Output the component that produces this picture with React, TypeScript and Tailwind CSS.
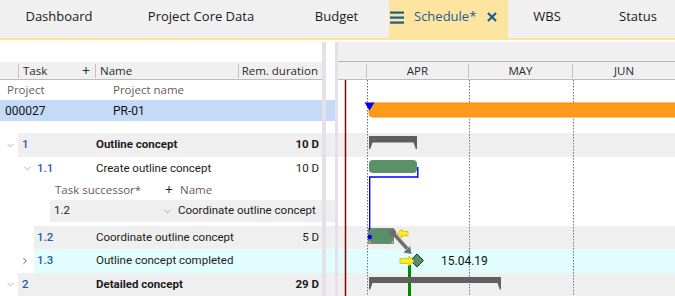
import { ChevronDown, ChevronRight } from "lucide-react";

const tabs = [
  { label: "Dashboard", w: "w-[118px]" },
  { label: "Project Core Data", w: "w-[166px]" },
  { label: "Budget", w: "w-[105px]" },
];

function TabBar() {
  return (
    <div className="flex h-[40px] bg-[#f0f0f0] border-b-2 border-[#fde493] font-['Open_Sans',sans-serif] text-[13px] text-[#1a1a1a]">
      {tabs.map((t) => (
        <div key={t.label} className={`${t.w} shrink-0 flex items-center justify-center pb-[4px]`}>
          {t.label}
        </div>
      ))}
      <div className="w-[119px] shrink-0 bg-[#fde59f] flex items-center pb-[4px] pl-[1px] text-[#1d5b94]">
        <svg width="14" height="13" viewBox="0 0 14 13" className="mr-[10px]">
          <rect x="0" y="0.5" width="14" height="2.2" fill="#1d5b94" />
          <rect x="0" y="5.5" width="14" height="2.2" fill="#1d5b94" />
          <rect x="0" y="10.5" width="14" height="2.2" fill="#1d5b94" />
        </svg>
        <span>Schedule*</span>
        <svg width="10" height="10" viewBox="0 0 10 10" className="ml-[11px]">
          <path d="M1 1 L9 9 M9 1 L1 9" stroke="#1d5b94" strokeWidth="2.2" />
        </svg>
      </div>
      <div className="w-[78px] shrink-0 flex items-center justify-center pb-[4px]">WBS</div>
      <div className="w-[104px] shrink-0 flex items-center justify-center pb-[4px]">Status</div>
    </div>
  );
}

function Row({
  h,
  bg = "",
  gap = "",
  gantt = "",
  children,
}: {
  h: string;
  bg?: string;
  gap?: string;
  gantt?: string;
  children?: React.ReactNode;
}) {
  return (
    <div className={`flex ${h}`}>
      <div className={`w-[322px] shrink-0 flex ${bg}`}>{children}</div>
      <div className="w-[4px] bg-[#e6e0e9]" />
      <div className={`w-[9px] ${gap}`} />
      <div className="w-[3px] bg-[#e6e0e9]" />
      <div className={`flex-1 ${gantt}`} />
    </div>
  );
}

function Chev() {
  return <ChevronDown size={11} strokeWidth={1.6} color="#9a9a9a" />;
}

function TaskRow({
  h,
  wide,
  lead,
  leadPad,
  num,
  name,
  dur,
  bold,
  bg,
  gantt,
}: {
  h: string;
  wide: boolean;
  lead?: React.ReactNode;
  leadPad: string;
  num: string;
  name: string;
  dur?: string;
  bold?: boolean;
  bg: string;
  gantt: string;
}) {
  return (
    <div className={`flex ${h}`}>
      <div className="w-[322px] shrink-0 flex">
        <div className={`${wide ? "w-[18px]" : "w-[34px]"} ${leadPad} flex items-center`}>{lead}</div>
        <div className={`flex-1 flex items-center ${bg} ${bold ? "font-bold" : ""}`}>
          <span className={`${wide ? "w-[78px] pl-[4px]" : "w-[62px] pl-[3px]"} font-medium text-[#1f5ea6]`}>
            {num}
          </span>
          <span className="flex-1 text-[#1c1c1c]">{name}</span>
          <span className="pr-[3px] text-[#1c1c1c]">{dur}</span>
        </div>
      </div>
      <div className="w-[4px] bg-[#e6e0e9]" />
      <div className={`w-[9px] ${bg}`} />
      <div className="w-[3px] bg-[#e6e0e9]" />
      <div className={`flex-1 ${gantt}`} />
    </div>
  );
}

function Divider() {
  return <div className="w-px h-[14px] bg-[#c4bfba] self-center" />;
}

function GanttDrawing() {
  return (
    <svg
      width="337"
      height="216"
      viewBox="0 0 337 216"
      className="absolute left-[338px] top-[38px]"
    >
      <line x1="7.5" y1="0" x2="7.5" y2="216" stroke="#8b0000" strokeWidth="1.5" />
      {[29.5, 131.5, 235.5].map((x) => (
        <line key={x} x1={x} y1="0" x2={x} y2="216" stroke="#6a7085" strokeWidth="1" strokeDasharray="1.5 1.5" />
      ))}
      {/* project bar */}
      <path d="M35 23 H340 V37 H35 Q31 37 31 33 V27 Q31 23 35 23 Z" fill="#ff9a1a" stroke="#f38d08" strokeWidth="1" />
      <polygon points="26.5,22.5 36.5,22.5 31.5,30.5" fill="#0000ee" />
      {/* summary 1 */}
      <path d="M31 56 H79 V69 H77.8 L75.5 62.5 H34.5 L32.2 69 H31 Z" fill="#5f5f5f" />
      {/* task 1.1 */}
      <rect x="31" y="80" width="48" height="13" rx="4" fill="#5a9168" />
      <path d="M79.8 87 V97 H31.7 V157" stroke="#0000ff" strokeWidth="1.4" fill="none" />
      {/* task 1.2 */}
      <rect x="31" y="149" width="24" height="14" rx="3" fill="#578f66" />
      <rect x="30.5" y="148.5" width="25" height="15" fill="none" stroke="#111" strokeWidth="1" strokeDasharray="1 1" />
      <circle cx="31.7" cy="157" r="2.3" fill="#0000ff" />
      {/* link arrow */}
      <circle cx="54.5" cy="152.5" r="3.5" fill="#6e6e6e" />
      <line x1="54.5" y1="152.5" x2="69" y2="168.5" stroke="#6e6e6e" strokeWidth="3.5" />
      <polygon points="73.5,174 65.5,172.5 72,166" fill="#6e6e6e" />
      <polygon points="59,153.5 64,149 64,151.3 70,151.3 70,155.7 64,155.7 64,158" fill="#ffeb2a" stroke="#d2b800" strokeWidth="0.8" />
      {/* milestone */}
      <rect x="70" y="185" width="3" height="31" fill="#008a00" />
      <polygon points="79,174 85.5,180.5 79,187 72.5,180.5" fill="#578f66" stroke="#2b2b2b" strokeWidth="1" />
      <polygon points="76,181 71,176 71,178.6 62,178.6 62,183.4 71,183.4 71,186" fill="#ffeb2a" stroke="#d2b800" strokeWidth="0.8" />
      <text x="103" y="184.5" fontFamily="Roboto, sans-serif" fontSize="12" fill="#111">
        15.04.19
      </text>
      {/* summary 2 */}
      <path d="M31 197 H163 V209.5 H161.8 L159.5 203 H34.5 L32.2 209.5 H31 Z" fill="#5f5f5f" />
    </svg>
  );
}

export default function App() {
  return (
    <div className="w-[675px] h-[296px] overflow-hidden bg-white font-['Roboto',sans-serif] text-[11.5px]">
      <TabBar />
      <div className="h-[2px]" />
      <div className="relative">
        {/* top band */}
        <div className="flex h-[20px]">
          <div className="w-[322px] shrink-0" />
          <div className="w-[4px] bg-[#e6e0e9]" />
          <div className="w-[9px]" />
          <div className="w-[3px] bg-[#e6e0e9]" />
          <div className="flex-1 bg-[#f0f0f0] border-b border-[#bab5b0]" />
        </div>
        {/* column header / months */}
        <div className="flex h-[18px] font-['Open_Sans',sans-serif] text-[11.5px] text-[#2a2a2a]">
          <div className="w-[322px] shrink-0 flex bg-[#f0f0f0] border-b border-[#c0bbb6]">
            <div className="w-[18px]" />
            <Divider />
            <div className="w-[76px] flex items-center justify-between pl-[4px] pr-[5px]">
              <span>Task</span>
              <span className="text-[14px] leading-none">+</span>
            </div>
            <Divider />
            <div className="w-[142px] flex items-center pl-[4px]">Name</div>
            <Divider />
            <div className="flex-1 flex items-center justify-end pr-[4px]">Rem. duration</div>
          </div>
          <div className="w-[4px] bg-[#e6e0e9]" />
          <div className="w-[9px]" />
          <div className="w-[3px] bg-[#e6e0e9]" />
          <div className="flex-1 flex bg-[#f0f0f0] border-b border-[#c0bbb6]">
            <div className="w-[28px]" />
            <Divider />
            <div className="w-[101px] flex items-center justify-center">APR</div>
            <Divider />
            <div className="w-[103px] flex items-center justify-center">MAY</div>
            <Divider />
            <div className="flex-1 flex items-center justify-center">JUN</div>
          </div>
        </div>
        {/* project labels */}
        <Row h="h-[20px]">
          <div className="flex items-center font-['Open_Sans',sans-serif] text-[11.5px] text-[#6b5a5a]">
            <span className="w-[113px] pl-[7px]">Project</span>
            <span>Project name</span>
          </div>
        </Row>
        <Row h="h-[21px]" bg="bg-[#c5daf8]" gap="bg-[#c5daf8]">
          <div className="flex items-center text-[12px] text-[#111]">
            <span className="w-[113px] pl-[5px]">000027</span>
            <span>PR-01</span>
          </div>
        </Row>
        <Row h="h-[12px]" />
        <TaskRow
          h="h-[24px]"
          wide
          lead={<Chev />}
          leadPad="pl-[5px]"
          num="1"
          name="Outline concept"
          dur="10 D"
          bold
          bg="bg-[#efefef]"
          gantt="bg-[#efefef]"
        />
        <TaskRow
          h="h-[23px]"
          wide={false}
          lead={<Chev />}
          leadPad="pl-[22px]"
          num="1.1"
          name="Create outline concept"
          dur="10 D"
          bg=""
          gantt=""
        />
        {/* successor header */}
        <Row h="h-[20px]">
          <div className="flex items-center whitespace-nowrap font-['Open_Sans',sans-serif] text-[11.5px] text-[#6b5a5a]">
            <span className="w-[165px] pl-[55px]">Task successor*</span>
            <span className="w-[15px] text-[14px] leading-none text-[#222]">+</span>
            <span>Name</span>
          </div>
        </Row>
        <Row h="h-[22px]" gap="bg-[#efefef]">
          <div className="w-[50px]" />
          <div className="flex-1 flex items-center bg-[#efefef] text-[#1c1c1c]">
            <span className="w-[112px] pl-[4px]">1.2</span>
            <span className="w-[16px]">
              <ChevronDown size={11} strokeWidth={1.6} color="#8a8a8a" />
            </span>
            <span>Coordinate outline concept</span>
          </div>
        </Row>
        <Row h="h-[4px]" />
        <TaskRow
          h="h-[23px]"
          wide={false}
          leadPad=""
          num="1.2"
          name="Coordinate outline concept"
          dur="5 D"
          bg="bg-[#efefef]"
          gantt="bg-[#efefef]"
        />
        <TaskRow
          h="h-[24px]"
          wide={false}
          lead={<ChevronRight size={10} strokeWidth={2.2} color="#555" />}
          leadPad="pl-[20px]"
          num="1.3"
          name="Outline concept completed"
          bg="bg-[#e1fdfd]"
          gantt="bg-[#e1fdfd]"
        />
        <TaskRow
          h="h-[23px]"
          wide
          lead={<Chev />}
          leadPad="pl-[5px]"
          num="2"
          name="Detailed concept"
          dur="29 D"
          bold
          bg="bg-[#efefef]"
          gantt="bg-[#efefef]"
        />
        <GanttDrawing />
      </div>
    </div>
  );
}
